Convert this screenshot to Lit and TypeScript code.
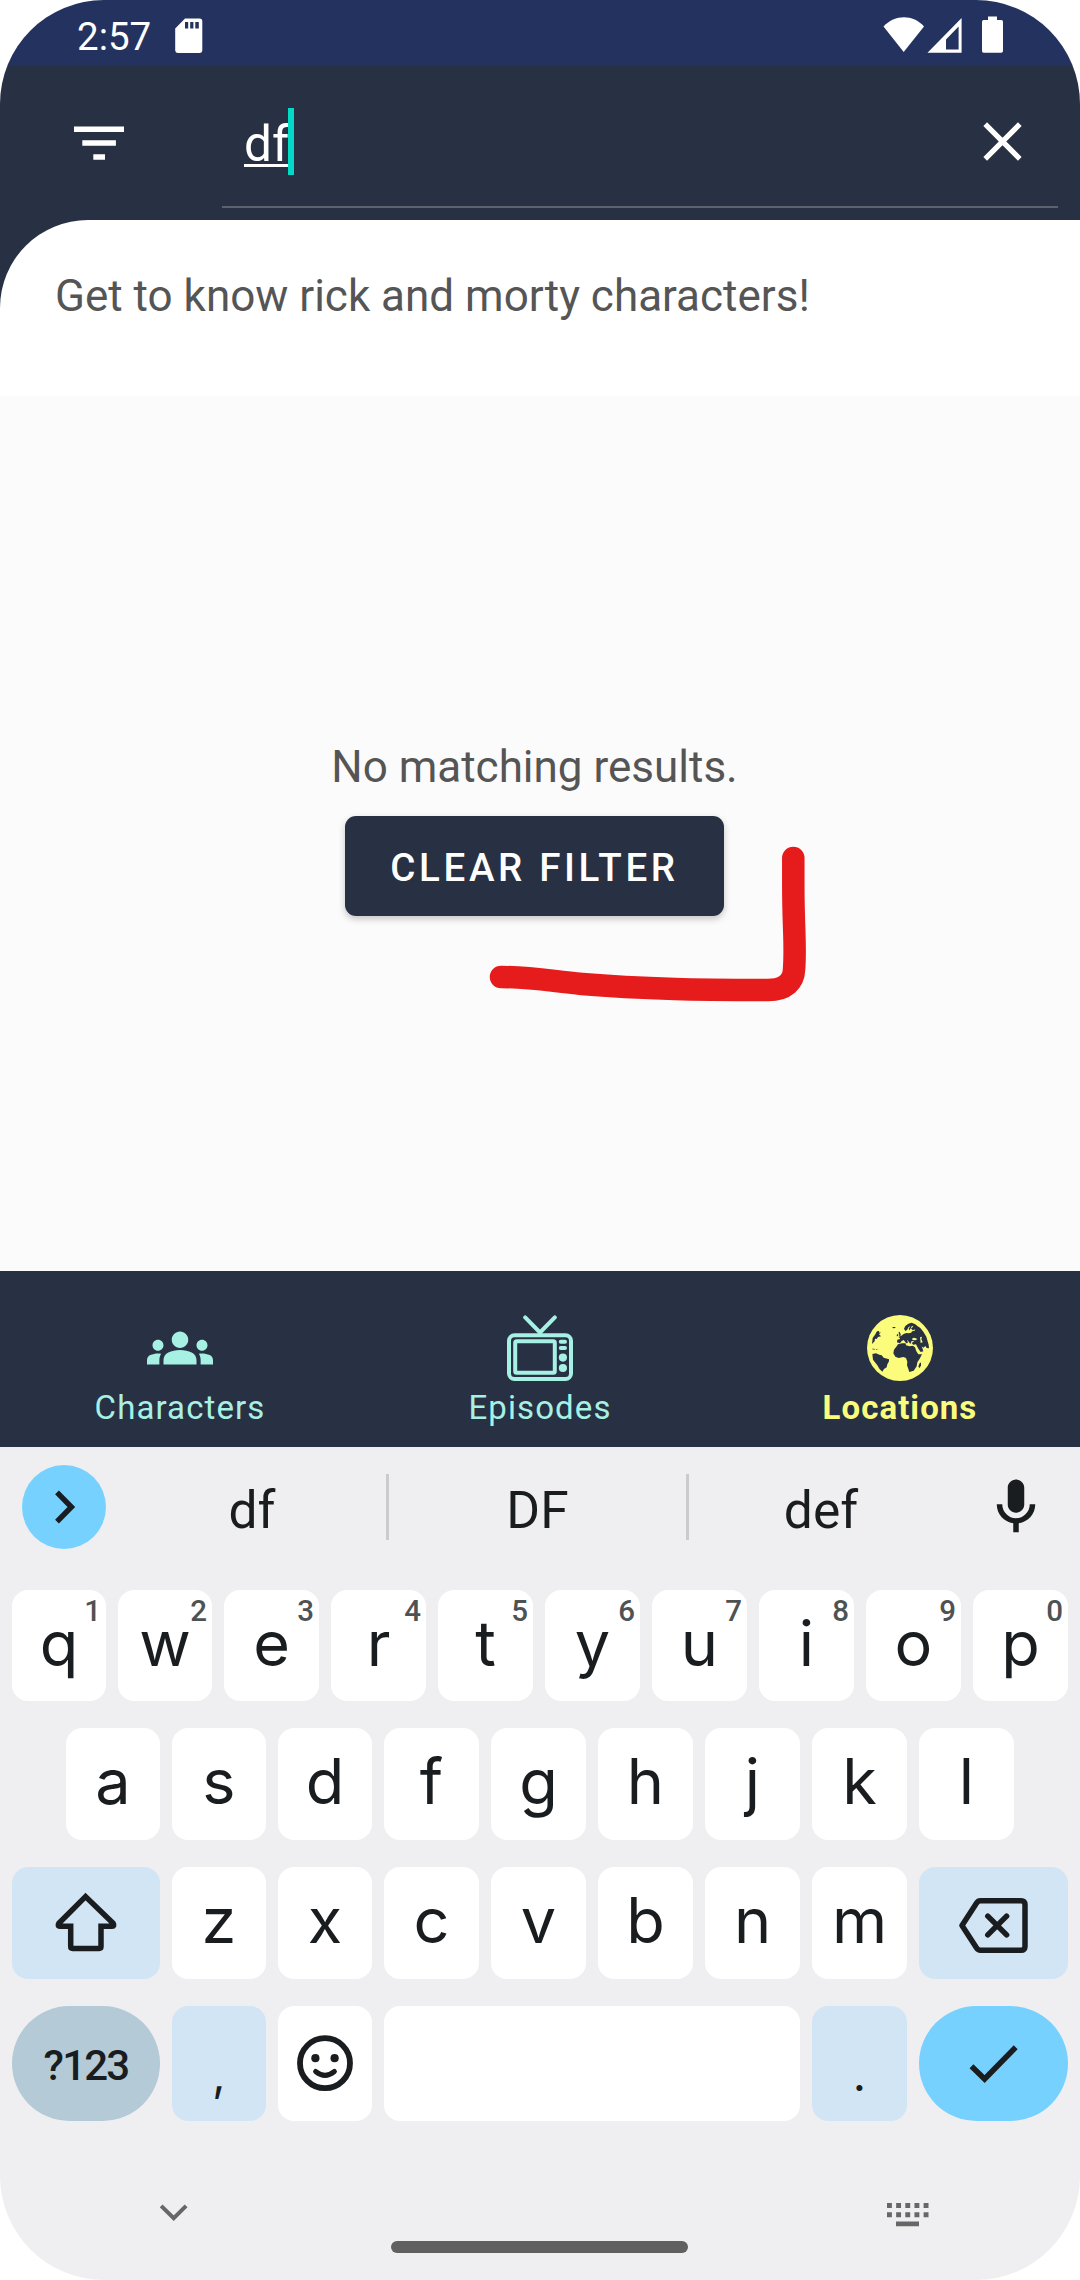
import { LitElement, html, css, svg, nothing } from "lit";
import { customElement, property } from "lit/decorators.js";

type Tone = "plain" | "soft" | "muted" | "accent";

interface KeySpec {
  label?: string;
  hint?: string;
  icon?: unknown;
  tone?: Tone;
  kind?: string;
}

const INK = "#191d1f";

const sdIcon = html`<svg class="sd" width="28" height="36" viewBox="0 0 28 36">
  <path fill="#fff" fill-rule="evenodd" d="M10 0.5H24.5A2.8 2.8 0 0 1 27.3 3.3V32.5A2.8 2.8 0 0 1 24.5 35H3A2.8 2.8 0 0 1 0.2 32.5V10.5ZM10 4V10.5H13.2V4ZM15.2 4V10.5H18.4V4ZM20.3 4V10.5H23.8V4Z"/>
</svg>`;

const statusIcons = html`<svg class="status-icons" width="122" height="38" viewBox="0 0 122 38">
  <path fill="#fff" d="M0.5 10.5C12 -1.8 30 -1.8 41 10.5L20.7 36Z"/>
  <path fill="#fff" fill-rule="evenodd" d="M78.6 2V36.8H44.5ZM75.6 10.5L63 23.5V33.4H75.6Z"/>
  <path fill="#fff" d="M105 0.5H114V4H118.3A1.8 1.8 0 0 1 120 5.8V35A1.8 1.8 0 0 1 118.2 36.8H101A1.8 1.8 0 0 1 99 35V5.8A1.8 1.8 0 0 1 100.8 4H105Z"/>
</svg>`;

const filterIcon = html`<svg width="50" height="36" viewBox="0 0 50 36">
  <path fill="#fff" d="M0 0.5H50V6H0ZM8.3 14.3H41.9V19.8H8.3ZM19.3 28.2H31V33.8H19.3Z"/>
</svg>`;

const closeIcon = html`<svg width="39" height="39" viewBox="0 0 39 39">
  <path stroke="#fff" stroke-width="5.2" d="M2.2 2.2L36.8 36.8M36.8 2.2L2.2 36.8"/>
</svg>`;

const groupsIcon = html`<svg width="66" height="66" viewBox="0 0 24 24" fill="currentColor">
  <path d="M12 12.75c1.63 0 3.07.39 4.24.9 1.08.48 1.76 1.56 1.76 2.73V18H6v-1.61c0-1.18.68-2.26 1.76-2.73 1.17-.52 2.61-.91 4.24-.91zM4 13c1.1 0 2-.9 2-2s-.9-2-2-2-2 .9-2 2 .9 2 2 2zm1.13 1.1c-.37-.06-.74-.1-1.13-.1-.99 0-1.93.21-2.78.58C.48 14.9 0 15.62 0 16.43V18h4.5v-1.61c0-.83.23-1.61.63-2.29zM20 13c1.1 0 2-.9 2-2s-.9-2-2-2-2 .9-2 2 .9 2 2 2zm4 3.43c0-.81-.48-1.53-1.22-1.85-.85-.37-1.79-.58-2.78-.58-.39 0-.76.04-1.13.1.4.68.63 1.46.63 2.29V18H24v-1.57zM12 6c1.66 0 3 1.34 3 3s-1.34 3-3 3-3-1.34-3-3 1.34-3 3-3z"/>
</svg>`;

const tvIcon = html`<svg width="66" height="66" viewBox="0 0 66 66" fill="none" stroke="currentColor" stroke-width="4">
  <path stroke-linecap="round" stroke-linejoin="round" d="M18.2 2.4L33 17.5L47.8 2.4"/>
  <rect x="2" y="20.2" width="62" height="43.8" rx="5.5"/>
  <rect x="8.2" y="26.3" width="39.6" height="31.4" rx="1.5"/>
  <g fill="currentColor" stroke="none">
    <rect x="51.8" y="24.8" width="8.2" height="3.9" rx="1.9"/>
    <rect x="51.8" y="31" width="8.2" height="3.9" rx="1.9"/>
    <circle cx="55.9" cy="42.6" r="4.1"/>
    <circle cx="55.9" cy="53" r="4.1"/>
  </g>
</svg>`;

const globeIcon = html`<svg width="66" height="66" viewBox="9 9 198 198">
  <circle cx="108" cy="108" r="99" fill="#fbfc7b"/>
  <g fill="#283043">
    <path d="M24 96L26 78L33 68L39 58L45 57L46 62L51 61L45 67L51 73L42 75L38 81L33 80L32 88Z"/>
    <path d="M24 110L31 110L34 113L25 112Z"/>
    <path d="M36 112L41 112.5L41 114L36 113.5Z"/>
    <path d="M85 45L94 45L94 48L87 49Z"/>
    <path d="M25 126L36 124L46 128L53 130L59 137L75 142L75 148L70 157L68 166L60 171L55 179L46 170L40 160L27 143Z"/>
    <path d="M88 124L90 113L98 103L102 97L114 94L125 94L126 100L137 103L146 101L153 106L157 118L163 127L174 127L167 140L160 151L158 163L149 176L136 180L132 168L129 160L130 149L126 138L118 135L104 138L94 134Z"/>
    <path d="M166 155L171 151L171 160L167 168L163 164Z"/>
    <path d="M99 91L100 83L108 81L107 77L103 75L112 71L119 66L127 63L134 64L141 62L146 58L137 57L134 50L139 43L134 45L129 54L124 57L120 50L124 42L133 35L143 32L154 37L160 42L169 48L178 59L187 74L194 98L195 109L188 108L184 102L178 107L173 103L176 111L178 118L170 120L163 110L156 97L148 98L143 93L151 88L143 87L139 96L133 88L129 83L132 92L127 94L119 84L113 87L108 94Z"/>
    <path d="M103 62L107 59L111 70L105 73L106 67ZM99 67L103 67L102 72L98 73Z"/>
  </g>
  <g fill="#fbfc7b">
    <path d="M145 79L151 77L160 81L155 85L145 84ZM168 76L174 74L172 81L176 91L170 93L169 84Z"/>
    <path d="M144 41L148 44L141 49L146 55L154 52L151 57L142 57L136 62L132 59L139 51Z"/>
  </g>
</svg>`;

const chevronRight = html`<svg width="84" height="84" viewBox="0 0 84 84">
  <path fill="none" stroke=${INK} stroke-width="5.4" d="M35 27.4L49.4 42L35 56.6"/>
</svg>`;

const micIcon = html`<svg width="66" height="66" viewBox="0 0 24 24">
  <path fill=${INK} d="M12 14.1c1.66 0 3-1.34 3-3V5c0-1.66-1.34-3-3-3S9 3.34 9 5v6.1c0 1.66 1.34 3 3 3zM17 11c0 2.76-2.24 5.1-5 5.1s-5-2.34-5-5.1H5c0 3.53 2.61 6.43 6 6.92V21.2h2v-3.28c3.39-.49 6-3.39 6-6.92h-2z"/>
</svg>`;

const shiftIcon = html`<svg width="66" height="66" viewBox="0 0 66 66">
  <path fill="none" stroke=${INK} stroke-width="5.5" d="M32.5 6.6L5.9 33.2Q4.2 36.2 6.9 36.2H17.7V56.5Q17.7 58.4 19.6 58.4H46.2Q48 58.4 48 56.5V36.2H59Q61.8 36.2 60.1 33.2Z"/>
</svg>`;

const backspaceIcon = html`<svg width="72" height="60" viewBox="0 0 72 60">
  <g fill="none" stroke=${INK} stroke-width="5.5">
    <path stroke-linejoin="round" d="M4 32.500L18.6 9.900Q20 7.800 22.5 7.800H63Q67 7.800 67 11.800V53.400Q67 57.200 63 57.200H22.5Q20 57.200 18.6 55Z"/>
    <path stroke-linecap="round" d="M29.800 23.1L48.6 41.900M48.6 23.1L29.800 41.900"/>
  </g>
</svg>`;

const emojiIcon = html`<svg width="60" height="60" viewBox="0 0 60 60">
  <g transform="translate(0 -0.8)">
    <circle cx="30" cy="30" r="25" fill="none" stroke=${INK} stroke-width="5.8"/>
    <circle cx="20.4" cy="25" r="4.1" fill=${INK}/>
    <circle cx="39.6" cy="25" r="4.1" fill=${INK}/>
    <path fill="none" stroke=${INK} stroke-width="5" stroke-linecap="round" d="M20.6 38.3Q30 46 39.4 38.3"/>
  </g>
</svg>`;

const checkIcon = html`<svg width="60" height="60" viewBox="0 0 60 60">
  <path fill="none" stroke=${INK} stroke-width="5.5" d="M7.500 32.200L20.600 45L51.700 13.300"/>
</svg>`;

const chevronDown = html`<svg width="28" height="18" viewBox="0 0 28 18">
  <path fill="none" stroke="#676767" stroke-width="4" d="M1.2 2.9L13.7 15.2L26.1 2.9"/>
</svg>`;

const keyboardDots = html`<svg width="42" height="24" viewBox="0 0 42 24" fill="#676767">
  ${[0, 1, 2, 3, 4].map((i) => svg`<path d="M${i * 9.15} 0h4.9v4.9h-4.9zM${i * 9.15} 9.3h4.9v4.9h-4.9z"/>`)}
  <path d="M9 18.6h23v4.6h-23z"/>
</svg>`;

const letters = (row: string): KeySpec[] => [...row].map((label) => ({ label }));

@customElement("status-bar")
class StatusBar extends LitElement {
  static styles = css`
    :host { display: flex; justify-content: space-between; height: 66px; box-sizing: border-box;
      padding: 14px 75px 0 77px; background: #24325f; color: #fff; }
    .left { display: flex; gap: 22px; }
    .time { font-size: 38.5px; line-height: 46px; width: 76px; }
    .sd { margin-top: 4px; }
    .status-icons { margin-top: 2px; }
  `;
  render() {
    return html`<div class="left"><span class="time">2:57</span>${sdIcon}</div>${statusIcons}`;
  }
}

@customElement("search-header")
class SearchHeader extends LitElement {
  static styles = css`
    :host { display: flex; height: 154px; background: #283043; }
    .filter { padding: 60px 98px 0 74px; }
    .filter svg, .close svg { display: block; }
    .field { display: flex; flex: 1; justify-content: space-between; height: 140px; margin-right: 22px;
      padding-left: 22px; border-bottom: 2px solid #5c6270; }
    .entry { display: flex; padding-top: 42px; }
    .query { color: #fff; font-size: 49.5px; line-height: 58px; margin-top: 7px;
      text-decoration: underline; text-decoration-thickness: 3px; text-underline-offset: 3px; text-decoration-skip-ink: none; }
    .caret { width: 6px; height: 67px; margin-left: -1px; background: #03dac5; }
    .close { padding: 56px 36px 0 0; }
  `;
  render() {
    return html`
      <div class="filter">${filterIcon}</div>
      <div class="field">
        <div class="entry"><span class="query">df</span><span class="caret"></span></div>
        <div class="close">${closeIcon}</div>
      </div>`;
  }
}

@customElement("bottom-nav")
class BottomNav extends LitElement {
  static styles = css`
    :host { display: grid; grid-template-columns: repeat(3, 1fr); height: 176px; background: #283043; }
    .item { display: flex; flex-direction: column; align-items: center; padding-top: 44px; color: #a6f0e4; }
    .item svg { display: block; }
    .label { font-size: 33px; line-height: 40px; margin-top: 7px; letter-spacing: 1.1px; }
    .active { color: #fbfc7b; }
    .active .label { font-weight: 700; letter-spacing: 1.05px; }
  `;
  render() {
    return html`
      <div class="item">${groupsIcon}<span class="label">Characters</span></div>
      <div class="item">${tvIcon}<span class="label">Episodes</span></div>
      <div class="item active">${globeIcon}<span class="label">Locations</span></div>`;
  }
}

@customElement("soft-key")
class SoftKey extends LitElement {
  @property({ attribute: false }) spec: KeySpec = {};
  static styles = css`
    :host { display: block; }
    .key { position: relative; display: flex; align-items: center; justify-content: center; height: 100%;
      border-radius: 16px; background: #fff; color: #191d1f; font-family: Inter, Roboto, sans-serif; }
    .soft { background: #d2e5f4; }
    .muted { background: #b4cad7; }
    .accent { background: #77d1ff; }
    .muted, .accent { border-radius: 58px; }
    .label { font-size: 63px; line-height: 72px; margin-bottom: 6px; }
    .mode .label { font-family: Roboto, sans-serif; font-size: 42px; font-weight: 500; letter-spacing: -1.8px; line-height: 48px; margin: 4px 0 0; }
    .punct .label { font-size: 46px; line-height: 60px; margin: 20px 0 0; }
    .hint { position: absolute; right: 5px; top: 5px; font-family: Roboto, sans-serif; font-size: 29.5px; font-weight: 500;
      line-height: 32px; color: #4f5253; }
    svg { display: block; }
  `;
  render() {
    const s = this.spec;
    return html`<div class="key ${s.tone ?? "plain"} ${s.kind ?? ""}">
      ${s.label ? html`<span class="label">${s.label}</span>` : nothing}
      ${s.icon ?? nothing}
      ${s.hint ? html`<span class="hint">${s.hint}</span>` : nothing}
    </div>`;
  }
}

@customElement("soft-keyboard")
class SoftKeyboard extends LitElement {
  static styles = css`
    :host { display: flex; flex-direction: column; height: 833px; background: #efeff1; color: #191d1f; }
    .strip { display: grid; grid-template-columns: 96px 268px 3px 297px 3px 264px 126px; height: 143px;
      padding-left: 22px; box-sizing: border-box; }
    .expand { width: 84px; height: 84px; margin-top: 18px; border-radius: 50%; background: #77d1ff; }
    .expand svg, .mic svg { display: block; }
    .word { text-align: center; font-size: 51.5px; line-height: 60px; padding-top: 34px; }
    .rule { height: 66px; margin-top: 27px; background: #cbcbcd; }
    .mic { padding: 27px 0 0 30px; }
    .rows { display: grid; grid-template-rows: 111px 112px 112px 115px; row-gap: 27px; }
    .row { display: grid; column-gap: 12px; padding: 0 12px; }
    .top { grid-template-columns: repeat(2, 94px) repeat(8, 95px); }
    .home { grid-template-columns: repeat(3, 94px) repeat(6, 95px); padding: 0 66px; }
    .low { grid-template-columns: 148px repeat(2, 94px) repeat(5, 95px) 149px; }
    .low { column-gap: 12px; }
    .base { grid-template-columns: 148px 94px 94px 1fr 95px 149px; }
    .foot { display: flex; justify-content: space-between; padding: 82px 151px 0 160px; height: 38px; }
    .pill { align-self: center; width: 297px; height: 12px; margin-right: 1px; border-radius: 6px; background: #606060; }
  `;
  private row(cls: string, keys: KeySpec[]) {
    return html`<div class="row ${cls}">${keys.map((k) => html`<soft-key .spec=${k}></soft-key>`)}</div>`;
  }
  render() {
    const top = letters("qwertyuiop").map((k, i) => ({ ...k, hint: String((i + 1) % 10) }));
    const low: KeySpec[] = [{ icon: shiftIcon, tone: "soft" }, ...letters("zxcvbnm"), { icon: backspaceIcon, tone: "soft" }];
    const base: KeySpec[] = [
      { label: "?123", tone: "muted", kind: "mode" },
      { label: ",", tone: "soft", kind: "punct" },
      { icon: emojiIcon },
      {},
      { label: ".", tone: "soft", kind: "punct" },
      { icon: checkIcon, tone: "accent" },
    ];
    return html`
      <div class="strip">
        <div class="expand">${chevronRight}</div>
        <div class="word">df</div><div class="rule"></div>
        <div class="word">DF</div><div class="rule"></div>
        <div class="word">def</div>
        <div class="mic">${micIcon}</div>
      </div>
      <div class="rows">
        ${this.row("top", top)}${this.row("home", letters("asdfghjkl"))}${this.row("low", low)}${this.row("base", base)}
      </div>
      <div class="foot">${chevronDown}${keyboardDots}</div>
      <div class="pill"></div>`;
  }
}

@customElement("app-root")
class AppRoot extends LitElement {
  static styles = css`
    :host { display: block; width: 1080px; height: 2280px; background: #fff; font-family: Roboto, sans-serif; }
    .screen { height: 2280px; border-radius: 104px; overflow: hidden; display: flex; flex-direction: column; }
    .intro-wrap { background: #283043; }
    .intro { height: 176px; box-sizing: border-box; padding: 50px 0 0 55px; border-top-left-radius: 88px; background: #fff;
      color: #555; font-size: 44px; line-height: 52px; }
    .results { position: relative; flex: 1; display: flex; flex-direction: column; align-items: center; padding: 345px 11px 0 0;
      background: #fbfbfb; }
    .empty { color: #555; font-size: 44px; line-height: 52px; }
    .clear { width: 379px; height: 100px; margin-top: 23px; padding: 3px 0 0; border: 0; border-radius: 11px; background: #283043; color: #fff;
      font-family: Roboto, sans-serif; font-size: 38.5px; font-weight: 500; letter-spacing: 3.65px;
      box-shadow: 0 3px 7px rgba(0, 0, 0, 0.22); }
    .mark { position: absolute; left: 480px; top: 440px; }
  `;
  render() {
    return html`<div class="screen">
      <status-bar></status-bar>
      <search-header></search-header>
      <div class="intro-wrap"><div class="intro">Get to know rick and morty characters!</div></div>
      <div class="results">
        <div class="empty">No matching results.</div>
        <button class="clear">CLEAR FILTER</button>
        <svg class="mark" width="340" height="180" viewBox="480 836 340 180">
          <path fill="none" stroke="#e61b1b" stroke-width="22.5" stroke-linecap="round" stroke-linejoin="round"
            d="M501 977C532 977 550 981 582 984C612 986.5 643 988 675 989C705 990 740 990 768 990C786 990 793.5 981 794 970C796 945 793.3 930 793.3 885V858"/>
        </svg>
      </div>
      <bottom-nav></bottom-nav>
      <soft-keyboard></soft-keyboard>
    </div>`;
  }
}
